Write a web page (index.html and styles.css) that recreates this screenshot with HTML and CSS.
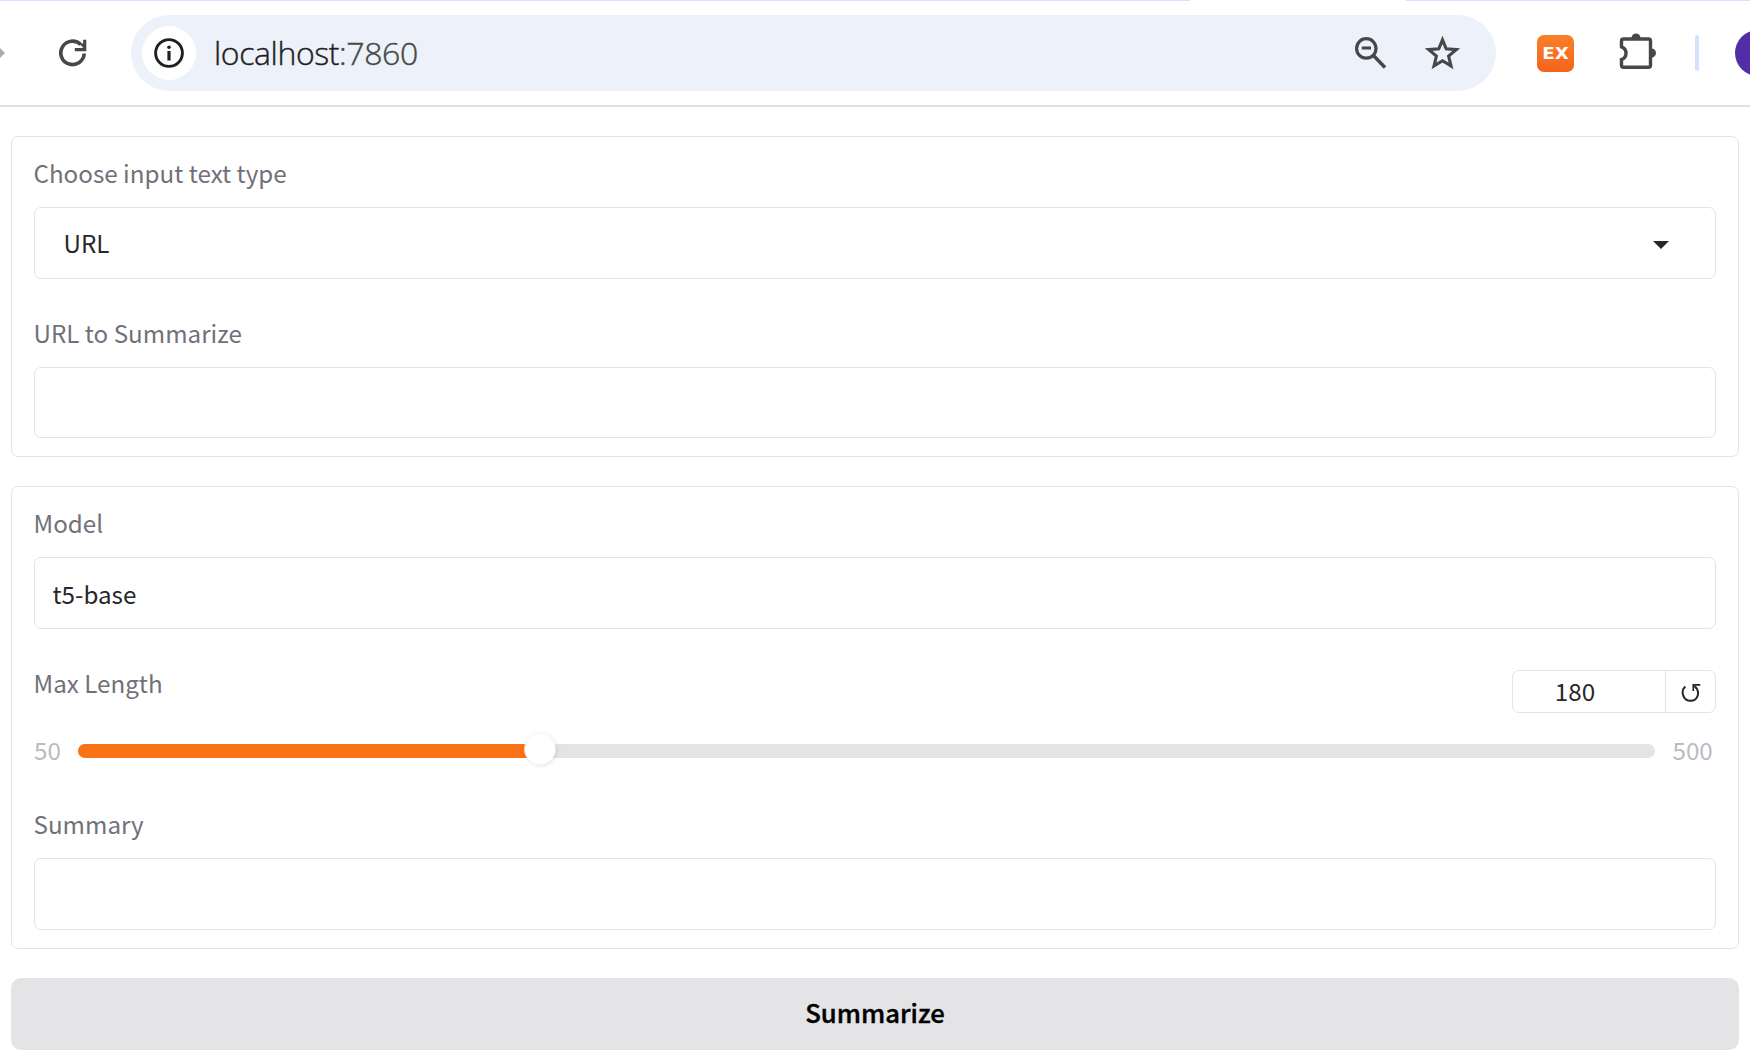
FILE: index.html
```html
<!DOCTYPE html>
<html lang="en">
<head>
<meta charset="utf-8">
<title>Summarize</title>
<link rel="stylesheet" href="styles.css">
</head>
<body>
<header class="toolbar">
  <svg class="forward" viewBox="0 0 5 12"><path d="M0 1 5 6 0 11z" fill="#ababab"/></svg>
  <svg class="reload" viewBox="0 0 28 28" fill="none" stroke="#474747" stroke-width="3.6"><path d="M25.2 14.5A11.7 11.7 0 1 1 21.8 5.6"/><path d="M15.8 10.6H25.7V.7" stroke-width="3.2"/><path d="M20.5 5 26 10.5V4z" fill="#474747" stroke="none"/></svg>
  <div class="omnibox">
    <span class="site-info"><svg viewBox="0 0 30 30"><circle cx="15" cy="15" r="13.4" fill="none" stroke="#1f1f1f" stroke-width="2.9"/><circle cx="15" cy="9.2" r="1.8" fill="#1f1f1f"/><path d="M13.4 13h3.2v9.5h-3.2z" fill="#1f1f1f"/></svg></span>
    <span class="address">localhost<span class="port">:7860</span></span>
    <svg class="zoom-out" viewBox="0 0 32 32" fill="none" stroke="#474747"><circle cx="11.3" cy="11.4" r="9.7" stroke-width="3.2"/><path d="M18.5 18.5 30 30.5" stroke-width="3.4"/><path d="M6.8 11h9.2" stroke-width="3"/></svg>
    <svg class="star" viewBox="0 0 35 34"><path d="M17.5 3.8 21.2 12.8 31.2 13.6 23.6 20 26 29.9 17.5 24.7 9 29.9 11.4 20 3.8 13.6 13.8 12.8z" fill="none" stroke="#474747" stroke-width="3.1"/></svg>
  </div>
  <span class="extension"><span class="extension-name">EX</span></span>
  <svg class="puzzle" viewBox="0 0 38 37"><path d="M4.5 6H29.5Q31.5 6 31.5 8V32.300Q31.500 34.300 29.500 34.300H4.500Q2.500 34.300 2.500 32.300V26.500Q7 25 7 20.200T2.500 13.800V8Q2.500 6 4.500 6z" fill="none" stroke="#474747" stroke-width="3.4"/><path d="M12.500 5a4.500 4.600 0 0 1 9 0zM32.500 15.500a4.500 4.600 0 0 1 0 9.200z" fill="#474747"/></svg>
  <span class="divider"></span>
  <span class="avatar"></span>
</header>
<main class="app">
  <section class="card">
    <div class="field">
      <label class="label">Choose input text type</label>
      <div class="input dropdown"><span>URL</span><svg class="caret" viewBox="0 0 16 8"><path d="M0 0h16L8 8z" fill="#27272a"/></svg></div>
    </div>
    <div class="field">
      <label class="label">URL to Summarize</label>
      <div class="input short"></div>
    </div>
  </section>
  <section class="card">
    <div class="field">
      <label class="label">Model</label>
      <div class="input">t5-base</div>
    </div>
    <div class="field slider-field">
      <div class="slider-head">
        <label class="label">Max Length</label>
        <div class="number"><span class="value">180</span><span class="reset">
          <svg viewBox="0 0 20 20" fill="none" stroke="#27272a" stroke-width="2"><path d="M4.300 3.500C-.7 8 1.800 17.800 9.500 17.800S19.800 8.500 13.500 3"/><path d="M12.300 8V1.800H19.300" stroke-width="1.700"/></svg></span></div>
      </div>
      <div class="slider-row">
        <span class="limit">50</span>
        <div class="track"><div class="fill" style="width:29.3%"><span class="thumb"></span></div></div>
        <span class="limit max">500</span>
      </div>
    </div>
    <div class="field">
      <label class="label">Summary</label>
      <div class="input"></div>
    </div>
  </section>
  <button class="submit">Summarize</button>
</main>
</body>
</html>
```
FILE: styles.css
```css
* { box-sizing: border-box; }
body {
  margin: 0;
  height: 1062px;
  overflow: hidden;
  background: #fff;
  color: #27272a;
  font: 24.2px/34px "Noto Sans CJK SC", "Noto Sans", sans-serif;
}
svg { display: block; flex: none; }
.toolbar {
  display: flex;
  align-items: center;
  height: 107px;
  overflow: hidden;
  border-bottom: 2px solid #e0e0e0;
  background:
    linear-gradient(#d3e3fd, #d3e3fd) 0 0 / 1190px 1px no-repeat,
    linear-gradient(#d3e3fd, #d3e3fd) 100% 0 / 344px 1px no-repeat;
}
.forward { width: 5px; height: 12px; }
.reload { width: 28px; height: 28px; margin: 0 44px 0 54px; }
.omnibox {
  display: flex;
  flex: none;
  align-items: center;
  width: 1365px;
  height: 76px;
  margin-top: 1px;
  padding: 0 36px 0 11px;
  border-radius: 38px;
  background: #ecf1fa;
}
.site-info {
  display: grid;
  place-items: center;
  width: 54px;
  height: 54px;
  border-radius: 50%;
  background: #fff;
}
.site-info svg { width: 30px; height: 30px; }
.address {
  flex: 1;
  margin-left: 18px;
  color: #1f1f1f;
  font: 300 32px/40px "Open Sans", sans-serif;
  letter-spacing: -0.4px;
  -webkit-text-stroke: 0.4px;
}
.port { color: #474747; }
.zoom-out { width: 32px; height: 32px; margin-right: 38.500px; }
.star { width: 35px; height: 34px; }
.extension {
  flex: none;
  width: 37px;
  height: 37px;
  margin: 1px 0 0 41px;
  border-radius: 7px;
  background: linear-gradient(#f98028, #f4641c);
  color: #fff;
  font: bold 15.500px/38px "DejaVu Sans", sans-serif;
  text-align: center;
}
.extension-name { display: block; transform: scaleX(1.17); }
.puzzle { width: 38px; height: 37px; margin: 0 38px 3px 45px; }
.divider { flex: none; width: 4px; height: 36px; border-radius: 2px; background: #d3e3fd; }
.avatar { flex: none; width: 46px; height: 46px; margin-left: 36px; border-radius: 50%; background: #512da8; }

.app { display: flex; flex-direction: column; gap: 29px; padding: 29px 11px 0; }
.card {
  display: flex;
  flex-direction: column;
  gap: 37px;
  padding: 19px 22px 18px;
  border: 1px solid #e4e4e7;
  border-radius: 7px;
}
.label { display: block; height: 36px; margin-left: -0.5px; color: #71717a; }
.input {
  display: flex;
  align-items: center;
  height: 72px;
  margin-top: 15px;
  padding: 2px 17.500px 0;
  border: 1px solid #e4e4e7;
  border-radius: 7px;
}
.input.short { height: 71px; }
.dropdown { justify-content: space-between; padding: 0 46px 0 28.500px; }
.caret { width: 16px; height: 8px; margin-top: 3px; }
.slider-head { display: flex; justify-content: space-between; height: 47px; }
.number {
  display: flex;
  width: 204px;
  height: 43px;
  margin-top: 4px;
  border: 1px solid #e4e4e7;
  border-radius: 7px;
}
.value { width: 152px; padding-right: 28px; line-height: 40px; text-align: center; }
.reset { display: grid; flex: 1; place-items: center; border-left: 1px solid #e4e4e7; }
.reset svg { width: 20px; height: 20px; margin-top: 2px; }
.slider-row { display: flex; align-items: center; height: 36px; margin-top: 20px; }
.slider-field { height: 104px; }
.limit { width: 44px; padding-bottom: 2px; color: #bbbbc2; }
.limit.max { width: 61px; padding-left: 17.500px; }
.track { flex: 1; height: 14px; border-radius: 7px; background: #e4e4e7; }
.fill { position: relative; height: 14px; border-radius: 7px; background: #f97316; }
.thumb {
  position: absolute;
  top: -10px;
  right: -15px;
  width: 30px;
  height: 30px;
  border-radius: 50%;
  background: #fff;
  box-shadow: 0 0 0 1px rgba(247, 247, 247, .8), 1px 1px 5px rgba(0, 0, 0, .15);
}
.submit {
  height: 72px;
  padding: 0 0 4px;
  border: 0;
  border-radius: 10px;
  background: #e4e4e7;
  color: #000;
  font: 500 25.7px/68px "Noto Sans CJK SC", sans-serif;
  -webkit-text-stroke: 0.4px;
}
```
